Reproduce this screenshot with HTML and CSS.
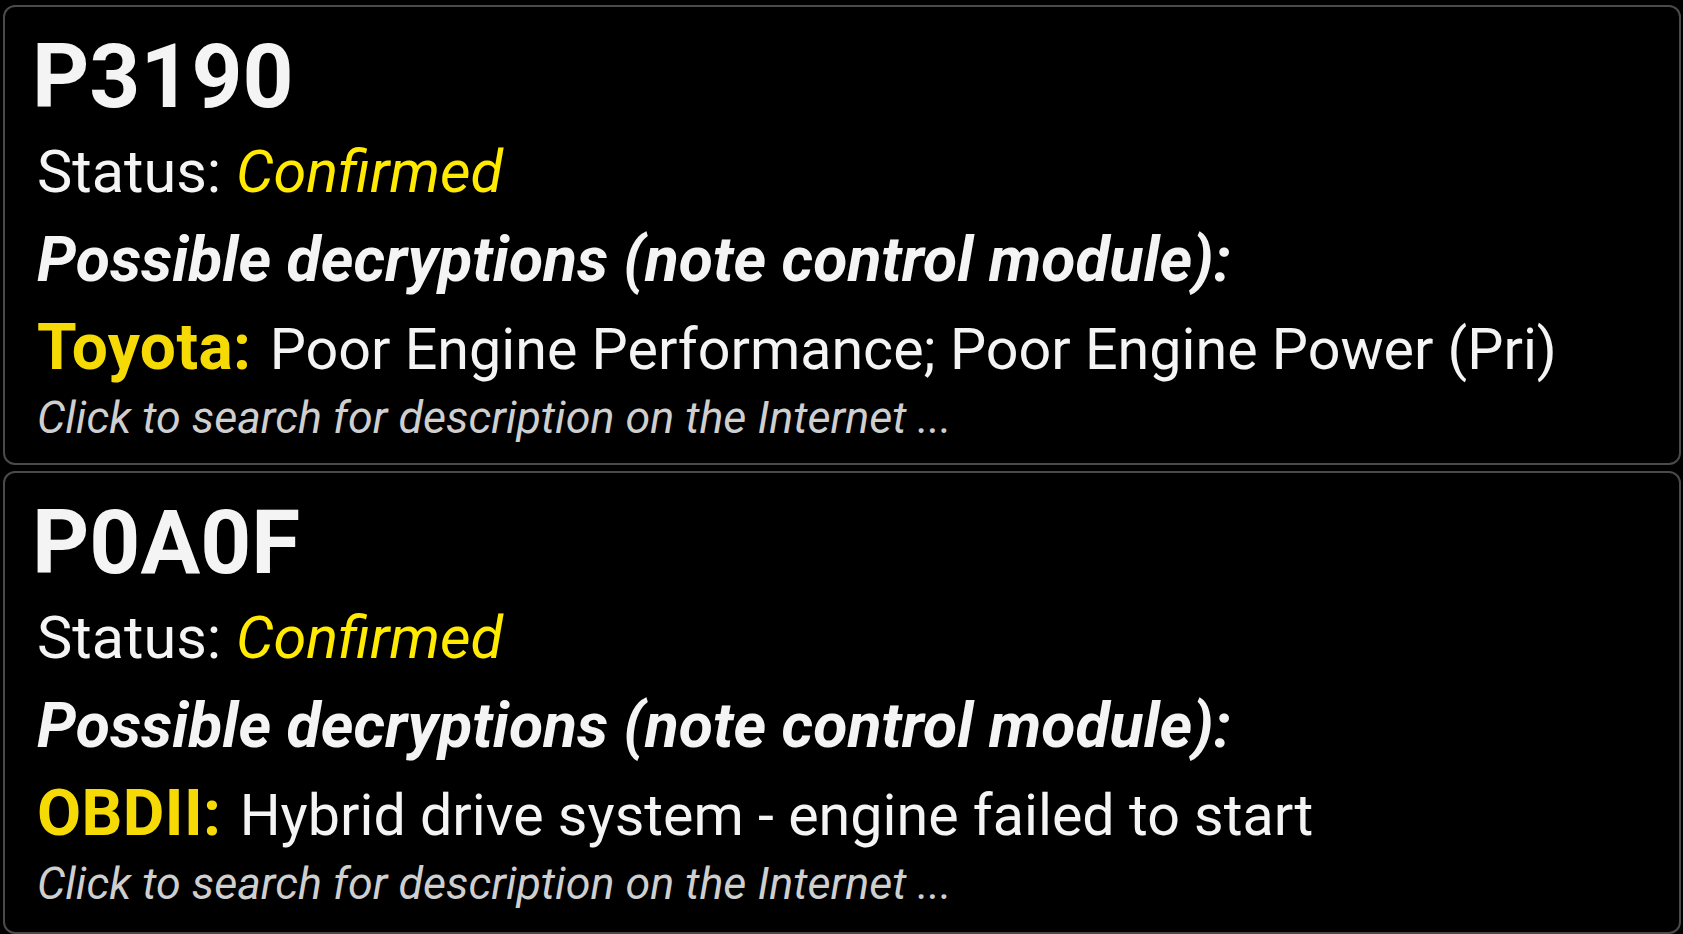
FILE: index.html
```html
<!DOCTYPE html>
<html lang="en">
<head>
<meta charset="utf-8">
<title>DTC list</title>
<link rel="stylesheet" href="styles.css">
</head>
<body>
<div class="list">
  <section class="card">
    <div class="code">P3190</div>
    <div class="status">Status: <span class="status-val">Confirmed</span></div>
    <div class="heading">Possible decryptions (note control module):</div>
    <div class="desc"><span class="maker">Toyota:</span> Poor Engine Performance; Poor Engine Power (Pri)</div>
    <div class="hint">Click to search for description on the Internet ...</div>
  </section>
  <section class="card">
    <div class="code">P0A0F</div>
    <div class="status">Status: <span class="status-val">Confirmed</span></div>
    <div class="heading">Possible decryptions (note control module):</div>
    <div class="desc"><span class="maker">OBDII:</span> Hybrid drive system - engine failed to start</div>
    <div class="hint">Click to search for description on the Internet ...</div>
  </section>
</div>
</body>
</html>
```
FILE: styles.css
```css
html, body {
  background: #000;
}
body {
  margin: 0;
  padding: 5px 2px 0 3px;
  font-family: Roboto, "Liberation Sans", sans-serif;
  color: #f4f4f4;
}
.list {
  display: flex;
  flex-direction: column;
  gap: 6px;
}
.card {
  border: 2px solid #4a4a4a;
  border-radius: 12px;
  padding: 20px 32px 24px 32px;
  white-space: nowrap;
}
.card + .card {
  padding-bottom: 27px;
}
.code {
  font-size: 89px;
  font-weight: 700;
  line-height: 100px;
  margin-left: -5px;
}
.status {
  font-size: 59.4px;
  line-height: 91.8px;
}
.status-val {
  color: #ffea00;
  font-style: italic;
}
.heading {
  font-size: 62.5px;
  font-weight: 700;
  font-style: italic;
  line-height: 82.2px;
}
.desc {
  font-size: 57.4px;
  line-height: 93.8px;
}
.maker {
  font-size: 64px;
  color: #f6da06;
  font-weight: 700;
  letter-spacing: 0.4px;
  margin-right: 4px;
}
.hint {
  font-size: 44.8px;
  font-style: italic;
  color: #cfcfcf;
  line-height: 42.4px;
}
```
